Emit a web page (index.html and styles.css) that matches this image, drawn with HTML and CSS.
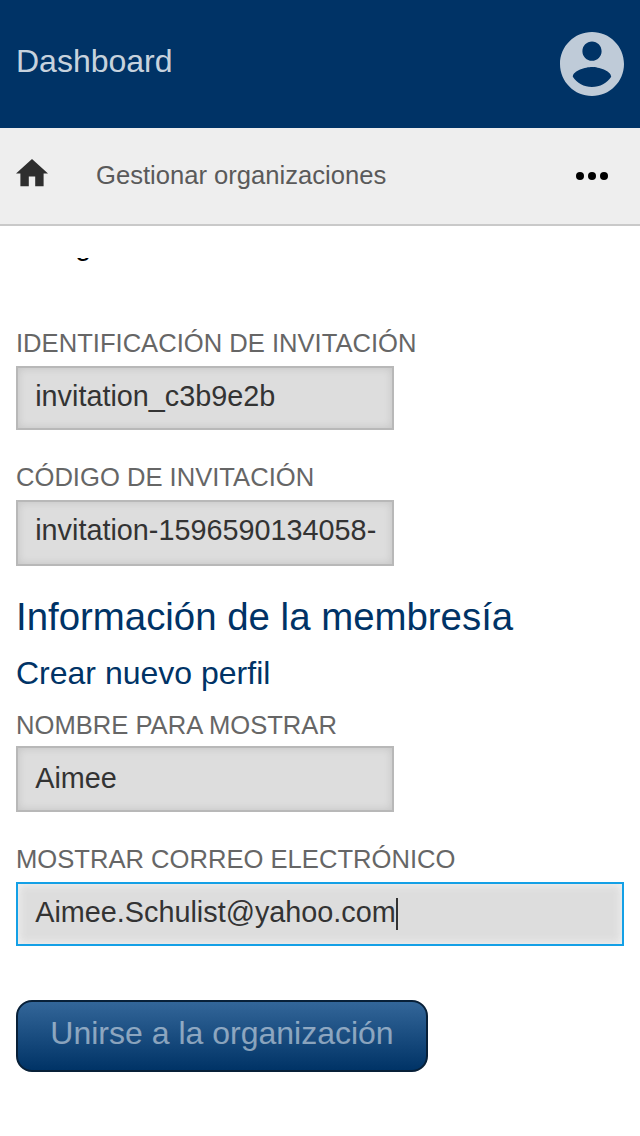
FILE: index.html
```html
<!DOCTYPE html>
<html lang="es">
<head>
<meta charset="utf-8">
<title>Dashboard</title>
<link rel="stylesheet" href="styles.css">
</head>
<body>
<header class="topbar">
  <span class="brand">Dashboard</span>
  <svg class="avatar" viewBox="2 2 20 20"><path fill="currentColor" d="M12 2C6.480 2 2 6.480 2 12s4.480 10 10 10 10-4.480 10-10S17.520 2 12 2zm0 3c1.660 0 3 1.340 3 3s-1.340 3-3 3-3-1.340-3-3 1.340-3 3-3zm0 14.200c-2.500 0-4.710-1.280-6-3.220.03-1.990 4-3.080 6-3.080 1.990 0 5.970 1.090 6 3.080-1.290 1.940-3.500 3.220-6 3.220z"/></svg>
</header>
<nav class="nav">
  <svg class="home" viewBox="0 0 32 28"><path fill="currentColor" d="M12.800 27.200V17.600h6.400v9.600h8.400V14.400H32L16 0 0 14.400h4.400v12.800z"/></svg>
  <span class="nav-title">Gestionar organizaciones</span>
  <svg class="more" viewBox="0 0 32 8"><circle cx="4" cy="4" r="4"/><circle cx="16" cy="4" r="4"/><circle cx="28" cy="4" r="4"/></svg>
</nav>
<main class="content">
  <div class="scrolled"><p class="scrolled-text">Código</p></div>
  <div class="field">
    <div class="label">IDENTIFICACIÓN DE INVITACIÓN</div>
    <div class="input short">invitation_c3b9e2b</div>
  </div>
  <div class="field">
    <div class="label">CÓDIGO DE INVITACIÓN</div>
    <div class="input">invitation-1596590134058-</div>
  </div>
  <h2 class="section">Información de la membresía</h2>
  <h3 class="subsection">Crear nuevo perfil</h3>
  <div class="field name">
    <div class="label">NOMBRE PARA MOSTRAR</div>
    <div class="input low">Aimee</div>
  </div>
  <div class="field">
    <div class="label">MOSTRAR CORREO ELECTRÓNICO</div>
    <div class="input short focused">Aimee.Schulist@yahoo.com<span class="caret"></span></div>
  </div>
  <button class="join" disabled>Unirse a la organización</button>
</main>
</body>
</html>
```

FILE: styles.css
```css
* { box-sizing: border-box; }
body {
  margin: 0;
  background: #fff;
  font-family: "Liberation Sans", Arial, sans-serif;
}
.topbar {
  height: 128px;
  padding: 0 16px;
  display: flex;
  align-items: center;
  justify-content: space-between;
  background: #003366;
  color: rgba(255, 255, 255, .75);
}
.brand {
  font-size: 32px;
  line-height: 36px;
  padding-bottom: 6px;
  color: rgba(255, 255, 255, .8);
}
.avatar { width: 64px; height: 64px; }
.nav {
  height: 98px;
  padding: 0 32px 0 16px;
  display: flex;
  align-items: center;
  background: #eee;
  border-bottom: 2px solid #c9c9c9;
}
.home { width: 32px; height: 28px; margin: 0 48px 7px 0; color: #2e2e2e; }
.nav-title { flex: 1; padding-bottom: 2px; font-size: 25.6px; line-height: 30px; color: #5a5a5a; }
.more { width: 32px; height: 8px; }
.content { padding: 32px 16px 0; }
.scrolled {
  height: 70px;
  overflow: hidden;
}
.scrolled-text {
  margin: -13px 0 0;
  height: 20px;
  font-size: 28.8px;
  line-height: 0;
  color: #000;
}
.field { margin-bottom: 32px; }
.label { height: 38px; font-size: 25.6px; line-height: 30px; color: #666; }
.name .label { height: 36px; }
.input {
  width: 378px;
  height: 66px;
  padding: 0 17.200px;
  border: 2px solid #b8b8b8;
  background: #ddd;
  box-shadow: inset 0 0 8px rgba(0, 0, 0, .12);
  font-size: 28.8px;
  line-height: 56px;
  color: #333;
  white-space: nowrap;
}
.short { height: 64px; }
.low { line-height: 60px; }
.focused {
  width: 100%;
  border-color: #14a0e6;
  box-shadow: inset 0 0 8px 1px #f2f2f2;
}
.caret {
  display: inline-block;
  width: 2px;
  height: 32px;
  margin: -4px 0;
  vertical-align: -4px;
  background: #333;
}
.section, .subsection { margin: 0; font-weight: 400; color: #003366; }
.section { font-size: 38.4px; line-height: 44px; margin-top: -3px; }
.subsection { font-size: 32px; line-height: 36px; margin: 16px 0 19px; }
.join {
  display: block;
  margin-top: 54px;
  width: 412px;
  height: 72px;
  padding: 0 0 6px;
  border: 2px solid #082038;
  border-radius: 16px;
  background: linear-gradient(#336699, #003366);
  color: rgba(255, 255, 255, .5);
  font: 32px "Liberation Sans", Arial, sans-serif;
}
```
